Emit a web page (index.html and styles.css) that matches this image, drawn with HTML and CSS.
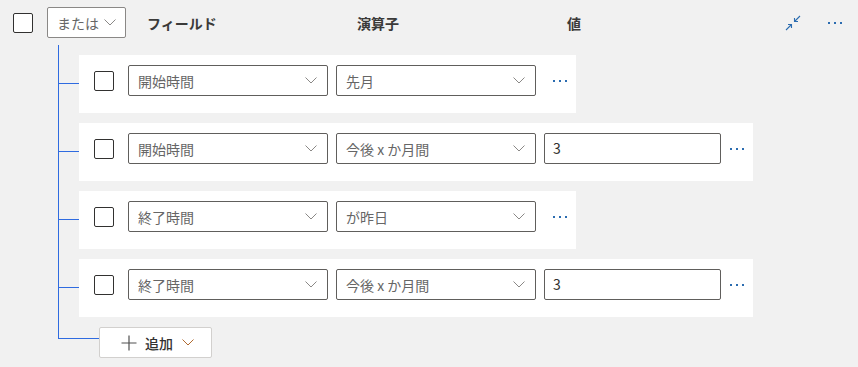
FILE: index.html
```html
<!DOCTYPE html>
<html lang="ja">
<head>
  <meta charset="UTF-8" />
  <meta name="viewport" content="width=device-width, initial-scale=1.0">
  <title>条件グループ</title>
  <link rel="stylesheet" href="styles.css">
</head>
<body>
  <div class="kopf">
    <span class="box"></span>
    <div class="auswahl oder">
      <span>または</span>
      <svg class="pfeil" width="12" height="7" viewBox="0 0 12 7"><path d="M0.5 0.5 L6 6 L11.5 0.5" fill="none" stroke="#8a8886" stroke-width="1"/></svg>
    </div>
    <div class="spalten">
      <span>フィールド</span>
      <span>演算子</span>
      <span>値</span>
    </div>
    <div class="aktionen">
      <button class="icon" title="折りたたむ">
        <svg width="16" height="16" viewBox="0 0 16 16" fill="none" stroke="#2b6cb0" stroke-width="1.1">
          <path d="M15 1 L9.5 6.5 M9.5 3 V6.5 H13"/>
          <path d="M1 15 L6.5 9.5 M3 9.5 H6.5 V13"/>
        </svg>
      </button>
      <button class="icon mehr"><i></i><i></i><i></i></button>
    </div>
  </div>

  <div class="baum">
    <div class="zeile">
      <span class="box"></span>
      <div class="auswahl"><span>開始時間</span><svg class="pfeil" width="12" height="7" viewBox="0 0 12 7"><path d="M0.5 0.5 L6 6 L11.5 0.5" fill="none" stroke="#8a8886"/></svg></div>
      <div class="auswahl"><span>先月</span><svg class="pfeil" width="12" height="7" viewBox="0 0 12 7"><path d="M0.5 0.5 L6 6 L11.5 0.5" fill="none" stroke="#8a8886"/></svg></div>
      <button class="icon mehr"><i></i><i></i><i></i></button>
    </div>

    <div class="zeile">
      <span class="box"></span>
      <div class="auswahl"><span>開始時間</span><svg class="pfeil" width="12" height="7" viewBox="0 0 12 7"><path d="M0.5 0.5 L6 6 L11.5 0.5" fill="none" stroke="#8a8886"/></svg></div>
      <div class="auswahl"><span>今後 x か月間</span><svg class="pfeil" width="12" height="7" viewBox="0 0 12 7"><path d="M0.5 0.5 L6 6 L11.5 0.5" fill="none" stroke="#8a8886"/></svg></div>
      <div class="wert">3</div>
      <button class="icon mehr"><i></i><i></i><i></i></button>
    </div>

    <div class="zeile">
      <span class="box"></span>
      <div class="auswahl"><span>終了時間</span><svg class="pfeil" width="12" height="7" viewBox="0 0 12 7"><path d="M0.5 0.5 L6 6 L11.5 0.5" fill="none" stroke="#8a8886"/></svg></div>
      <div class="auswahl"><span>が昨日</span><svg class="pfeil" width="12" height="7" viewBox="0 0 12 7"><path d="M0.5 0.5 L6 6 L11.5 0.5" fill="none" stroke="#8a8886"/></svg></div>
      <button class="icon mehr"><i></i><i></i><i></i></button>
    </div>

    <div class="zeile">
      <span class="box"></span>
      <div class="auswahl"><span>終了時間</span><svg class="pfeil" width="12" height="7" viewBox="0 0 12 7"><path d="M0.5 0.5 L6 6 L11.5 0.5" fill="none" stroke="#8a8886"/></svg></div>
      <div class="auswahl"><span>今後 x か月間</span><svg class="pfeil" width="12" height="7" viewBox="0 0 12 7"><path d="M0.5 0.5 L6 6 L11.5 0.5" fill="none" stroke="#8a8886"/></svg></div>
      <div class="wert">3</div>
      <button class="icon mehr"><i></i><i></i><i></i></button>
    </div>
  </div>

  <div class="hinzu">
    <span class="ast"></span>
    <button class="neu">
      <svg width="16" height="16" viewBox="0 0 16 16"><path d="M8 0.5 V15.5 M0.5 8 H15.5" stroke="#505050" stroke-width="1.2" fill="none"/></svg>
      <span>追加</span>
      <svg width="12" height="7" viewBox="0 0 12 7"><path d="M0.5 0.5 L6 6 L11.5 0.5" fill="none" stroke="#b06a30"/></svg>
    </button>
  </div>
</body>
</html>
```

FILE: styles.css
```css
body {
  margin: 0;
  background: #f1f1f1;
  font-family: "Noto Sans CJK JP", "Noto Sans", sans-serif;
  font-size: 14px;
  color: #323130;
  width: 858px;
  height: 367px;
  overflow: hidden;
}

button {
  font: inherit;
  background: none;
  border: none;
  padding: 0;
  cursor: pointer;
}

.box {
  display: block;
  flex: none;
  width: 20px;
  height: 20px;
  box-sizing: border-box;
  border: 1px solid #323130;
  border-radius: 2px;
  background: white;
}

/* Kopfzeile */
.kopf {
  display: flex;
  align-items: center;
  height: 31px;
  padding: 7px 7px 7px 13px;
}

.kopf .box {
  margin-right: 14px;
}

.auswahl {
  display: flex;
  align-items: center;
  justify-content: space-between;
  box-sizing: border-box;
  width: 200px;
  height: 31px;
  padding: 0 10px 0 9px;
  border: 1px solid #605e5c;
  border-radius: 2px;
  background: white;
  color: #666;
  line-height: 20px;
}

.auswahl.oder {
  width: 80px;
  border-color: #8a8886;
  padding-right: 9px;
}

.spalten {
  display: flex;
  margin-left: 21px;
  font-weight: bold;
  color: #3b3a39;
}

.spalten span {
  width: 210px;
}

.aktionen {
  display: flex;
  gap: 10px;
  margin-left: auto;
}

.icon {
  display: flex;
  align-items: center;
  justify-content: center;
  width: 32px;
  height: 31px;
}

.mehr {
  gap: 4px;
}

.mehr i {
  display: block;
  width: 2px;
  height: 2px;
  background: #2b6cb0;
}

/* Baum mit Bedingungen */
.baum {
  display: flex;
  flex-direction: column;
  align-items: flex-start;
  gap: 10px;
  margin-left: 58px;
  padding: 10px 0 10px 20px;
  border-left: 1px solid #2f6be0;
}

.zeile {
  position: relative;
  display: flex;
  align-items: flex-start;
  gap: 8px;
  padding: 10px 0 17px 15px;
  background: white;
}

.zeile::before {
  content: "";
  position: absolute;
  left: -20px;
  top: 28px;
  width: 20px;
  height: 1px;
  background: #2f6be0;
}

.zeile .box {
  margin-top: 6px;
  margin-right: 6px;
}

.wert {
  box-sizing: border-box;
  width: 177px;
  height: 31px;
  margin-right: -8px;
  padding: 0 8px;
  border: 1px solid #605e5c;
  border-radius: 2px;
  line-height: 29px;
  color: #323130;
}

/* Hinzufügen */
.hinzu {
  display: flex;
  align-items: flex-start;
  margin-left: 58px;
}

.ast {
  width: 40px;
  height: 11px;
  border-left: 1px solid #2f6be0;
  border-bottom: 1px solid #2f6be0;
}

.neu {
  display: flex;
  align-items: center;
  box-sizing: border-box;
  width: 113px;
  height: 31px;
  padding-left: 21px;
  background: white;
  border: 1px solid #d2d0ce;
  border-radius: 2px;
  color: #323130;
}

.neu span {
  margin: 0 9px 0 8px;
  font-weight: 500;
}
```
